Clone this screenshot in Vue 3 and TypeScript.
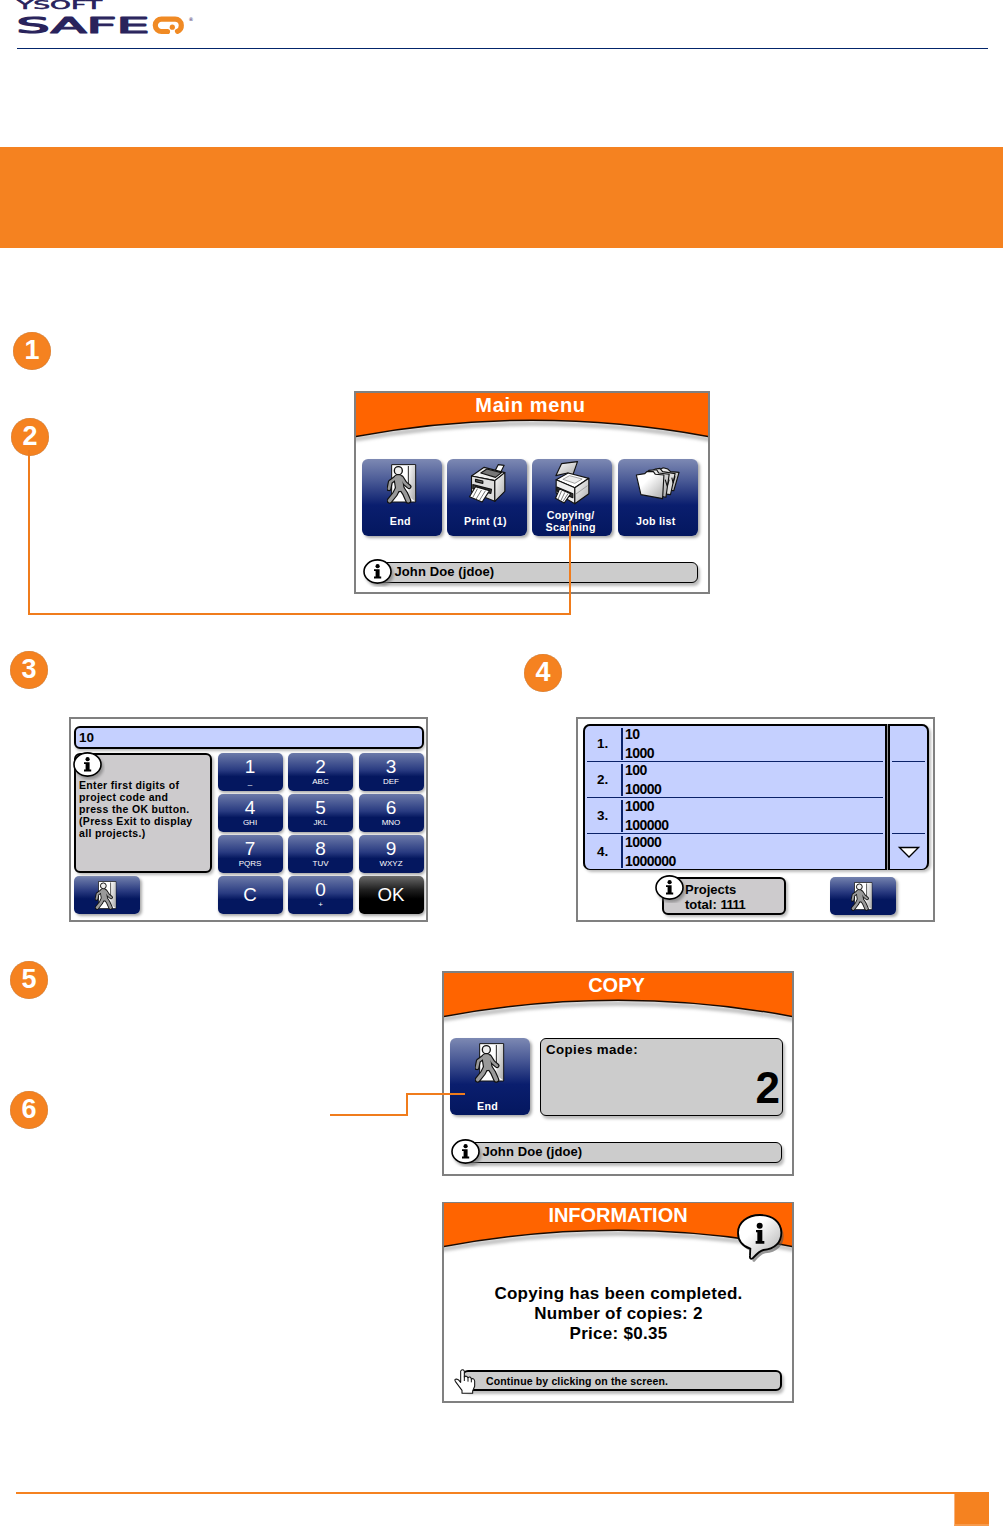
<script setup lang="ts">
interface Tile { label: string[]; icon: string; two?: boolean }
interface Key { main: string; sub?: string; dark?: boolean }
interface Project { no: string; code: string; name: string }

const tiles: Tile[] = [
  { label: ['End'], icon: 'exit' },
  { label: ['Print (1)'], icon: 'printer' },
  { label: ['Copying/', 'Scanning'], icon: 'copier', two: true },
  { label: ['Job list'], icon: 'folders' },
]
const keys: Key[] = [
  { main: '1', sub: '_' }, { main: '2', sub: 'ABC' }, { main: '3', sub: 'DEF' },
  { main: '4', sub: 'GHI' }, { main: '5', sub: 'JKL' }, { main: '6', sub: 'MNO' },
  { main: '7', sub: 'PQRS' }, { main: '8', sub: 'TUV' }, { main: '9', sub: 'WXYZ' },
  { main: 'C' }, { main: '0', sub: '+' }, { main: 'OK', dark: true },
]
const projects: Project[] = [
  { no: '1.', code: '10', name: '1000' },
  { no: '2.', code: '100', name: '10000' },
  { no: '3.', code: '1000', name: '100000' },
  { no: '4.', code: '10000', name: '1000000' },
]
</script>

<template>
  <div class="page">
    <svg class="defs" width="0" height="0" aria-hidden="true">
      <defs>
        <linearGradient id="metal" x1="0" y1="0" x2="1" y2="1">
          <stop offset="0" stop-color="#fff" /><stop offset="1" stop-color="#aaa" />
        </linearGradient>
        <linearGradient id="bubbleFill" x1="0" y1="0" x2="1" y2="1">
          <stop offset="0.35" stop-color="#fff" /><stop offset="1" stop-color="#aaa" />
        </linearGradient>
        <filter id="soft" x="-20%" y="-40%" width="140%" height="200%"><feGaussianBlur stdDeviation="1.6" /></filter>
      </defs>
      <symbol id="exit" viewBox="0 0 90 120">
        <path d="M14 2H86V114H14Z" fill="#fff" stroke="#111" stroke-width="3" />
        <path d="M64 6 84 4V112L64 96Z" fill="url(#metal)" />
        <path d="M64 6V62" stroke="#222" stroke-width="3" />
        <g fill="none" stroke-linecap="round" stroke-linejoin="round">
          <g stroke="#111">
            <path d="M26 42 10 54 6 74M44 42 54 58 66 68" stroke-width="15" />
            <path d="M34 70 24 90 8 110M42 70 54 88 64 110" stroke-width="18" />
            <path d="M34 44 38 70" stroke-width="29" />
          </g>
          <g stroke="#999">
            <path d="M26 42 10 54 6 74M44 42 54 58 66 68" stroke-width="8" />
            <path d="M34 70 24 90 8 110M42 70 54 88 64 110" stroke-width="11" />
            <path d="M34 44 38 70" stroke-width="22" />
          </g>
        </g>
        <circle cx="34" cy="20" r="12" fill="#eee" stroke="#111" stroke-width="4" />
      </symbol>
      <symbol id="printer" viewBox="0 0 116 120">
        <g stroke="#111" stroke-width="3.4" stroke-linejoin="round">
          <path d="M80 22 90 2 108 4 98 24Z" fill="#fff" />
          <path d="M10 36 48 10 110 26 80 50Z" fill="#eee" />
          <path d="M38 27 56 15 100 26 82 40Z" fill="#777" />
          <path d="M10 36 80 50V112L10 84Z" fill="#ddd" />
          <path d="M80 50 110 26V82L80 112Z" fill="url(#metal)" />
          <path d="M14 62 70 76 68 88 14 74Z" fill="#444" />
          <path d="M22 68 64 80 42 114 4 98Z" fill="#fff" />
          <path d="M28 74 14 100M40 78 24 105M52 80 34 109" stroke="#555" stroke-width="2.4" fill="none" />
          <path d="M22 46 44 51V58L22 53Z" fill="#666" />
        </g>
      </symbol>
      <symbol id="copier" viewBox="0 0 110 132">
        <g stroke="#111" stroke-width="3.4" stroke-linejoin="round">
          <path d="M5 44 22 8 70 2 56 42 40 36Z" fill="url(#metal)" />
          <path d="M6 56 42 36 104 52 62 80Z" fill="#fff" />
          <path d="M26 55 46 44 84 54 62 67Z" fill="#eee" stroke="#777" stroke-width="2" />
          <path d="M6 56 62 80V128L6 96Z" fill="#eee" />
          <path d="M62 80 104 52V98L62 128Z" fill="url(#metal)" />
          <path d="M8 78 56 98V110L8 90Z" fill="#333" />
          <path d="M16 84 50 98 30 126 4 112Z" fill="#fff" />
          <path d="M22 90 12 114M32 94 20 119M42 97 26 122" stroke="#555" stroke-width="2.4" fill="none" />
          <path d="M64 100 100 74" stroke="#888" stroke-width="2" />
        </g>
      </symbol>
      <symbol id="folders" viewBox="0 0 140 104">
        <g stroke="#111" stroke-width="3.4" stroke-linejoin="round">
          <path d="M66 14 86 4 100 8 108 16 134 18 118 74 88 70Z" fill="url(#metal)" />
          <path d="M40 20 62 8 76 6 84 16 122 22 108 86 76 82Z" fill="#ddd" />
          <path d="M28 24 42 12 66 10 72 20 104 24 94 94 66 88Z" fill="url(#metal)" />
          <path d="M4 26 30 22 36 16 56 16 62 24 88 26 84 98 18 86Z" fill="url(#bubbleFill)" />
          <path d="M92 40 98 60 104 40M112 34 116 50 122 30" fill="none" />
        </g>
      </symbol>
      <symbol id="info" viewBox="0 0 32 28">
        <ellipse cx="16.5" cy="15.5" rx="14" ry="12" fill="#777" filter="url(#soft)" opacity=".7" />
        <ellipse cx="14.5" cy="12.5" rx="13.5" ry="11.6" fill="#fff" stroke="#000" stroke-width="1.6" />
        <circle cx="14.6" cy="7.2" r="2.1" />
        <path d="M11 10.3H16.6V17.6H18.2V19.4H11V17.6H12.6V12H11Z" />
      </symbol>
      <symbol id="arch" viewBox="0 0 352 56" preserveAspectRatio="none">
        <path d="M-6 47Q176 14 358 47" fill="none" stroke="#c4c4c4" stroke-width="5" filter="url(#soft)" />
        <path d="M-3 -3H355V44Q176 10.5 -3 44Z" fill="#ff6400" stroke="#1a0a00" stroke-width="1.5" />
      </symbol>
    </svg>

    <header class="top">
      <svg class="logo" width="180" height="44" viewBox="0 0 180 44">
        <g fill="#29235c" stroke="#29235c" font-family="DejaVu Sans" font-weight="400" stroke-linejoin="round">
          <text x="0" y="8.8" font-size="12" textLength="85" lengthAdjust="spacingAndGlyphs" stroke-width=".5">YSOFT</text>
          <text x="-.5" y="33" font-size="21.8" textLength="133" lengthAdjust="spacingAndGlyphs" stroke-width="1.2">SAFE</text>
          <text x="171.5" y="21" font-size="5" stroke="none">®</text>
        </g>
        <path d="M150.5 31.5H145A6.2 6.2 0 0 1 138.3 25.3A6.2 6.2 0 0 1 145 19.1H157.5A6.2 6.2 0 0 1 164.3 25.3A6.2 6.2 0 0 1 160.5 31.3" fill="none" stroke="#f08a24" stroke-width="5.2" stroke-linecap="round" />
        <circle cx="155.3" cy="27.2" r="2.6" fill="#f08a24" />
      </svg>
    </header>

    <div class="banner"></div>

    <section class="row-menu">
      <div class="marks"><span class="badge b1">1</span><span class="badge b2">2</span></div>
      <div class="panel menu">
        <div class="title">
          <svg class="arch"><use href="#arch" /></svg>
          <h2 class="wide">Main menu</h2>
        </div>
        <div class="tiles">
          <button v-for="t in tiles" :key="t.icon" class="tile" :class="{ two: t.two }">
            <svg :class="['ico', t.icon]"><use :href="'#' + t.icon" /></svg>
            <span v-for="l in t.label" :key="l">{{ l }}</span>
          </button>
        </div>
        <div class="status"><svg class="info"><use href="#info" /></svg><p>John Doe (jdoe)</p></div>
      </div>
    </section>

    <section class="row-project">
      <div class="col3">
        <span class="badge">3</span>
        <div class="panel keypad">
          <div class="field">10</div>
          <div class="pad">
            <div class="side">
              <div class="hint">
                <svg class="info"><use href="#info" /></svg>
                <p>Enter first digits of<br>project code and<br>press the OK button.<br>(Press Exit to display<br>all projects.)</p>
              </div>
              <button class="exitbtn"><svg><use href="#exit" /></svg></button>
            </div>
            <div class="keys">
              <button v-for="k in keys" :key="k.main" class="key" :class="{ dark: k.dark, solo: !k.sub }">
                <b>{{ k.main }}</b><small v-if="k.sub">{{ k.sub }}</small>
              </button>
            </div>
          </div>
        </div>
      </div>
      <div class="col4">
        <span class="badge">4</span>
        <div class="panel projects">
          <div class="table">
            <div class="list">
              <div v-for="p in projects" :key="p.no" class="item">
                <span class="no">{{ p.no }}</span>
                <div class="codes"><span>{{ p.code }}</span><span>{{ p.name }}</span></div>
              </div>
            </div>
            <div class="scroll">
              <i class="up"></i><i class="track"></i>
              <svg width="22" height="13" viewBox="0 0 22 13"><path d="M1.5 1.5H20.5L11 11Z" fill="#fff" stroke="#000" stroke-width="1.4" /></svg>
            </div>
          </div>
          <div class="below">
            <div class="total">
              <svg class="info"><use href="#info" /></svg>
              <p>Projects<br>total: <em>1111</em></p>
            </div>
            <button class="exitbtn"><svg><use href="#exit" /></svg></button>
          </div>
        </div>
      </div>
    </section>

    <section class="row-copy">
      <div class="marks"><span class="badge">5</span><span class="badge b6">6</span></div>
      <div class="stack">
        <div class="panel copy">
          <div class="title">
            <svg class="arch"><use href="#arch" /></svg>
            <h2>COPY</h2>
          </div>
          <div class="made">
            <button class="tile low"><svg class="ico exit"><use href="#exit" /></svg><span>End</span></button>
            <div class="count"><p>Copies made:</p><strong>2</strong></div>
          </div>
          <div class="status"><svg class="info"><use href="#info" /></svg><p>John Doe (jdoe)</p></div>
        </div>
        <div class="panel done">
          <div class="title">
            <svg class="arch"><use href="#arch" /></svg>
            <h2>INFORMATION</h2>
            <svg class="bubble" width="50" height="52" viewBox="0 0 150 156">
              <path d="M72 8C110 8 137 30 137 61C137 90 116 111 82 113C70 116 62 125 50 138C44 140 42 136 44 128L45 108C20 101 5 84 5 61C5 30 34 8 72 8Z" transform="translate(6 8)" fill="#555" opacity=".6" filter="url(#soft)" />
              <path d="M72 6C110 6 136 28 136 59C136 88 116 109 82 111C70 114 62 123 50 136C44 140 41 136 42 128L43 107C19 99 6 82 6 59C6 28 34 6 72 6Z" fill="url(#bubbleFill)" stroke="#000" stroke-width="5.5" />
              <circle cx="71" cy="38" r="9" />
              <path d="M60 51H79V84H85V92H59V84H64V58H60Z" />
            </svg>
          </div>
          <p class="message">Copying has been completed.<br>Number of copies: 2<br>Price: $0.35</p>
          <div class="status tap">
            <svg class="hand" width="24" height="27" viewBox="0 0 72 81">
              <path d="M20 6Q26 -1 31 6V24Q37 18 42 26Q49 20 52 30Q60 26 62 36V52L56 66V73H24V64Q12 48 4 37Q0 30 8 30Q14 31 20 40Z" fill="#fff" stroke="#111" stroke-width="3.2" stroke-linejoin="round" />
              <path d="M31 22V36M42 25V38M52 30V40" stroke="#111" stroke-width="3" />
            </svg>
            <p>Continue by clicking on the screen.</p>
          </div>
        </div>
      </div>
    </section>

    <footer class="foot"><span></span></footer>

    <svg class="connectors" width="1003" height="1526" viewBox="0 0 1003 1526">
      <path d="M29 450V614H570V521M330 1115H407V1094H465" fill="none" stroke="#f07c1c" stroke-width="2" />
    </svg>
  </div>
</template>

<style>
body { margin: 0; background: #fff; }
</style>

<style scoped>
.page { position: relative; display: flex; flex-direction: column; width: 1003px; height: 1526px; overflow: hidden; background: #fff; font-family: "Liberation Sans", Arial, sans-serif; color: #000; }
.page * { box-sizing: border-box; }
.defs { position: absolute; }
p, h2 { margin: 0; }
button { border: 0; padding: 0; font: inherit; color: #fff; }
svg { display: block; overflow: visible; flex: none; }
.top { height: 49px; margin: 0 15px 0 17px; border-bottom: 1px solid #03256b; flex: none; }
.banner { flex: none; height: 101px; margin-top: 98px; background: #f58220; }
.badge { display: block; width: 38px; height: 38px; border-radius: 50%; background: #f58220; color: #fff; font-weight: 700; font-size: 27px; line-height: 37px; text-align: center; flex: none; box-shadow: inset 0 0 1px #9b7a5e; }
.connectors { position: absolute; left: 0; top: 0; pointer-events: none; }
.panel { border: 2px solid #808080; background: #fff; display: flex; flex-direction: column; }

.row-menu { display: flex; margin-top: 84px; height: 262px; }
.row-menu .marks { width: 354px; }
.b1 { margin-left: 13px; }
.b2 { margin: 48px 0 0 11px; }
.menu { width: 356px; height: 203px; margin-top: 59px; }
.title { display: grid; height: 66px; justify-items: center; align-items: start; flex: none; }
.arch { grid-area: 1 / 1; width: 100%; height: 56px; overflow: hidden; }
.title h2 { grid-area: 1 / 1; z-index: 1; font-size: 20px; line-height: 24px; color: #fff; font-weight: 700; padding-right: 3px; }
.title h2.wide { letter-spacing: .65px; }
.tiles { display: flex; gap: 5.2px; padding-left: 6px; }
.tile { width: 80px; height: 77px; border-radius: 6px; display: flex; flex-direction: column; align-items: center; background: linear-gradient(#7d89b3, #4a5a96 28%, #0a1e6e 60%, #04175f); box-shadow: 2px 2px 3px #aaa; font-weight: 700; font-size: 10.7px; line-height: 12px; letter-spacing: .25px; }
.tile span { padding-right: 3.5px; }
.ico { margin: 5px 0 11px; height: 40px; width: 30px; }
.two .ico { margin: 2px 0 4px; }
.ico.printer { width: 39px; }
.ico.copier { width: 37px; height: 44px; }
.ico.folders { width: 46px; height: 35px; margin: 7px 0 14px; }
.low .ico { margin-bottom: 17px; }
.low span { padding-right: 5px; }
.status { position: relative; display: flex; margin: 26px 10px 0 22px; height: 21px; border: 1.5px solid #000; border-radius: 6px; background: #ccc; box-shadow: 2px 3px 3px #bbb; }
.status .info { position: absolute; left: -16px; top: -4px; }
.info { width: 32px; height: 28px; }
.status p { margin-left: 15.5px; font-weight: 700; font-size: 13px; line-height: 17px; letter-spacing: .1px; white-space: nowrap; }

.row-project { display: flex; margin-top: 57px; height: 271px; }
.col3 { width: 514px; padding-left: 10px; }
.col4 { padding: 3px 0 0 10px; }
.keypad { width: 359px; height: 205px; margin: 28px 0 0 59px; padding: 7px 2px 0 3px; }
.field { height: 23px; border: 2px solid #000; border-radius: 6px; background: #c5d0ff; box-shadow: 1px 2px 3px #bbb; font-weight: 700; font-size: 13.5px; line-height: 19px; padding-left: 3px; flex: none; }
.pad { display: flex; gap: 5.5px; margin-top: 4px; }
.side { width: 138px; flex: none; }
.hint { position: relative; height: 120px; border: 2px solid #000; border-radius: 6px; background: #cdcbcd; box-shadow: 2px 2px 3px #bbb; padding: 24px 0 0 3px; }
.hint .info { position: absolute; left: -3px; top: -3px; }
.hint p { font-weight: 700; font-size: 10.5px; line-height: 12px; letter-spacing: .33px; white-space: nowrap; }
.exitbtn { display: flex; justify-content: center; align-items: center; width: 66px; height: 38px; border-radius: 5px; background: linear-gradient(#7482ae, #28397f 40%, #04175f 60%); box-shadow: 2px 2px 3px #aaa; }
.exitbtn svg { width: 22px; height: 29px; margin-right: 3px; }
.side .exitbtn { margin-top: 3px; }
.keys { display: grid; grid-template-columns: repeat(3, 65px); grid-auto-rows: 38px; gap: 3px 5.5px; }
.key { display: flex; flex-direction: column; align-items: center; border-radius: 5px; background: linear-gradient(#6c7aa9, #293b81 45%, #04175f 62%); box-shadow: 1px 2px 3px #aaa; }
.key b { font-weight: 400; font-size: 19px; line-height: 20px; margin-top: 4px; }
.key small { font-size: 8px; line-height: 8px; margin-top: 1px; }
.key.solo b { margin-top: 9px; font-size: 18.7px; }
.key.dark { background: linear-gradient(#6a6a6a, #222 35%, #000 60%); }

.projects { width: 359px; height: 205px; margin: 25px 0 0 52px; padding: 5px 4px 0 5px; }
.table { display: flex; height: 146px; gap: 1px; flex: none; background: #999; border-radius: 7px; box-shadow: 2px 2px 3px #bbb; }
.list { width: 304px; border: 2px solid #000; border-bottom-width: 1.5px; border-radius: 7px 0 0 7px; background: #c5d0ff; padding: 0 2px; display: grid; grid-template-rows: 36px 36px 36px 34px; }
.item { display: flex; align-items: flex-start; border-bottom: 1.5px solid #0a2268; font-weight: 700; }
.item:last-child { border: 0; }
.no { width: 34px; padding-left: 10px; font-size: 13.5px; line-height: 36px; }
.codes { display: flex; flex-direction: column; height: 32px; margin-top: 2px; border-left: 2px solid #0a2268; padding-left: 2px; font-size: 14px; line-height: 19.4px; letter-spacing: -.55px; }
.codes span { position: relative; top: -3px; }
.scroll { width: 41px; border: 2px solid #000; border-bottom-width: 1.5px; border-radius: 0 7px 7px 0; background: #c5d0ff; display: flex; flex-direction: column; align-items: center; }
.scroll i { display: block; width: 33px; border-bottom: 1.5px solid #0a2268; }
.up { height: 36px; }
.track { height: 72px; }
.scroll svg { margin-top: 12px; }
.below { display: flex; padding-left: 79px; margin-top: 7px; }
.total { position: relative; width: 124px; height: 38px; border: 2px solid #000; border-radius: 6px; background: #cdcbcd; box-shadow: 2px 2px 3px #bbb; }
.total .info { position: absolute; left: -9px; top: -4px; }
.total p { margin: 3px 0 0 21px; font-weight: 700; font-size: 13px; line-height: 15px; white-space: nowrap; }
.total em { font-style: normal; letter-spacing: -.5px; }
.below .exitbtn { margin-left: 44px; }

.row-copy { display: flex; margin-top: 39px; }
.row-copy .marks { width: 442px; padding-left: 10px; }
.b6 { margin-top: 92px; }
.stack { display: flex; flex-direction: column; gap: 26px; padding-top: 10px; }
.copy { width: 352px; height: 205px; }
.copy .title { height: 65px; }
.made { display: flex; padding-left: 6px; gap: 10px; }
.count { width: 243px; height: 78px; border: 1.5px solid #000; border-radius: 6px; background: #ccc; box-shadow: 2px 3px 3px #bbb; padding: 2px 2px 0 5px; display: flex; flex-direction: column; font-weight: 700; }
.count p { font-size: 13.3px; line-height: 17px; letter-spacing: .4px; }
.count strong { align-self: flex-end; font-size: 44px; line-height: 50px; margin-top: 5px; }
.done { width: 352px; height: 201px; }
.done .title { height: 80px; }
.done .arch { margin-top: -1px; }
.done h2 { line-height: 22px; padding-right: 0; letter-spacing: -.05px; }
.bubble { grid-area: 1 / 1; z-index: 2; justify-self: end; margin: 9px 6px 0 0; }
.message { text-align: center; font-weight: 700; font-size: 17px; line-height: 19.8px; letter-spacing: .27px; padding-left: 1px; }
.tap { margin: 27px 10px 0 18px; border-width: 2px; }
.tap p { margin-left: 22px; font-size: 10.5px; line-height: 19px; letter-spacing: .15px; }
.hand { position: absolute; left: -10px; top: -3px; }

.foot { margin: auto 14px 0 16px; height: 34px; border-top: 2px solid #f58220; display: flex; justify-content: flex-end; flex: none; }
.foot span { width: 35px; height: 32px; background: #f58220; border-left: 1px solid #f9b27a; border-bottom: 2px solid #f79a4b; }
</style>
